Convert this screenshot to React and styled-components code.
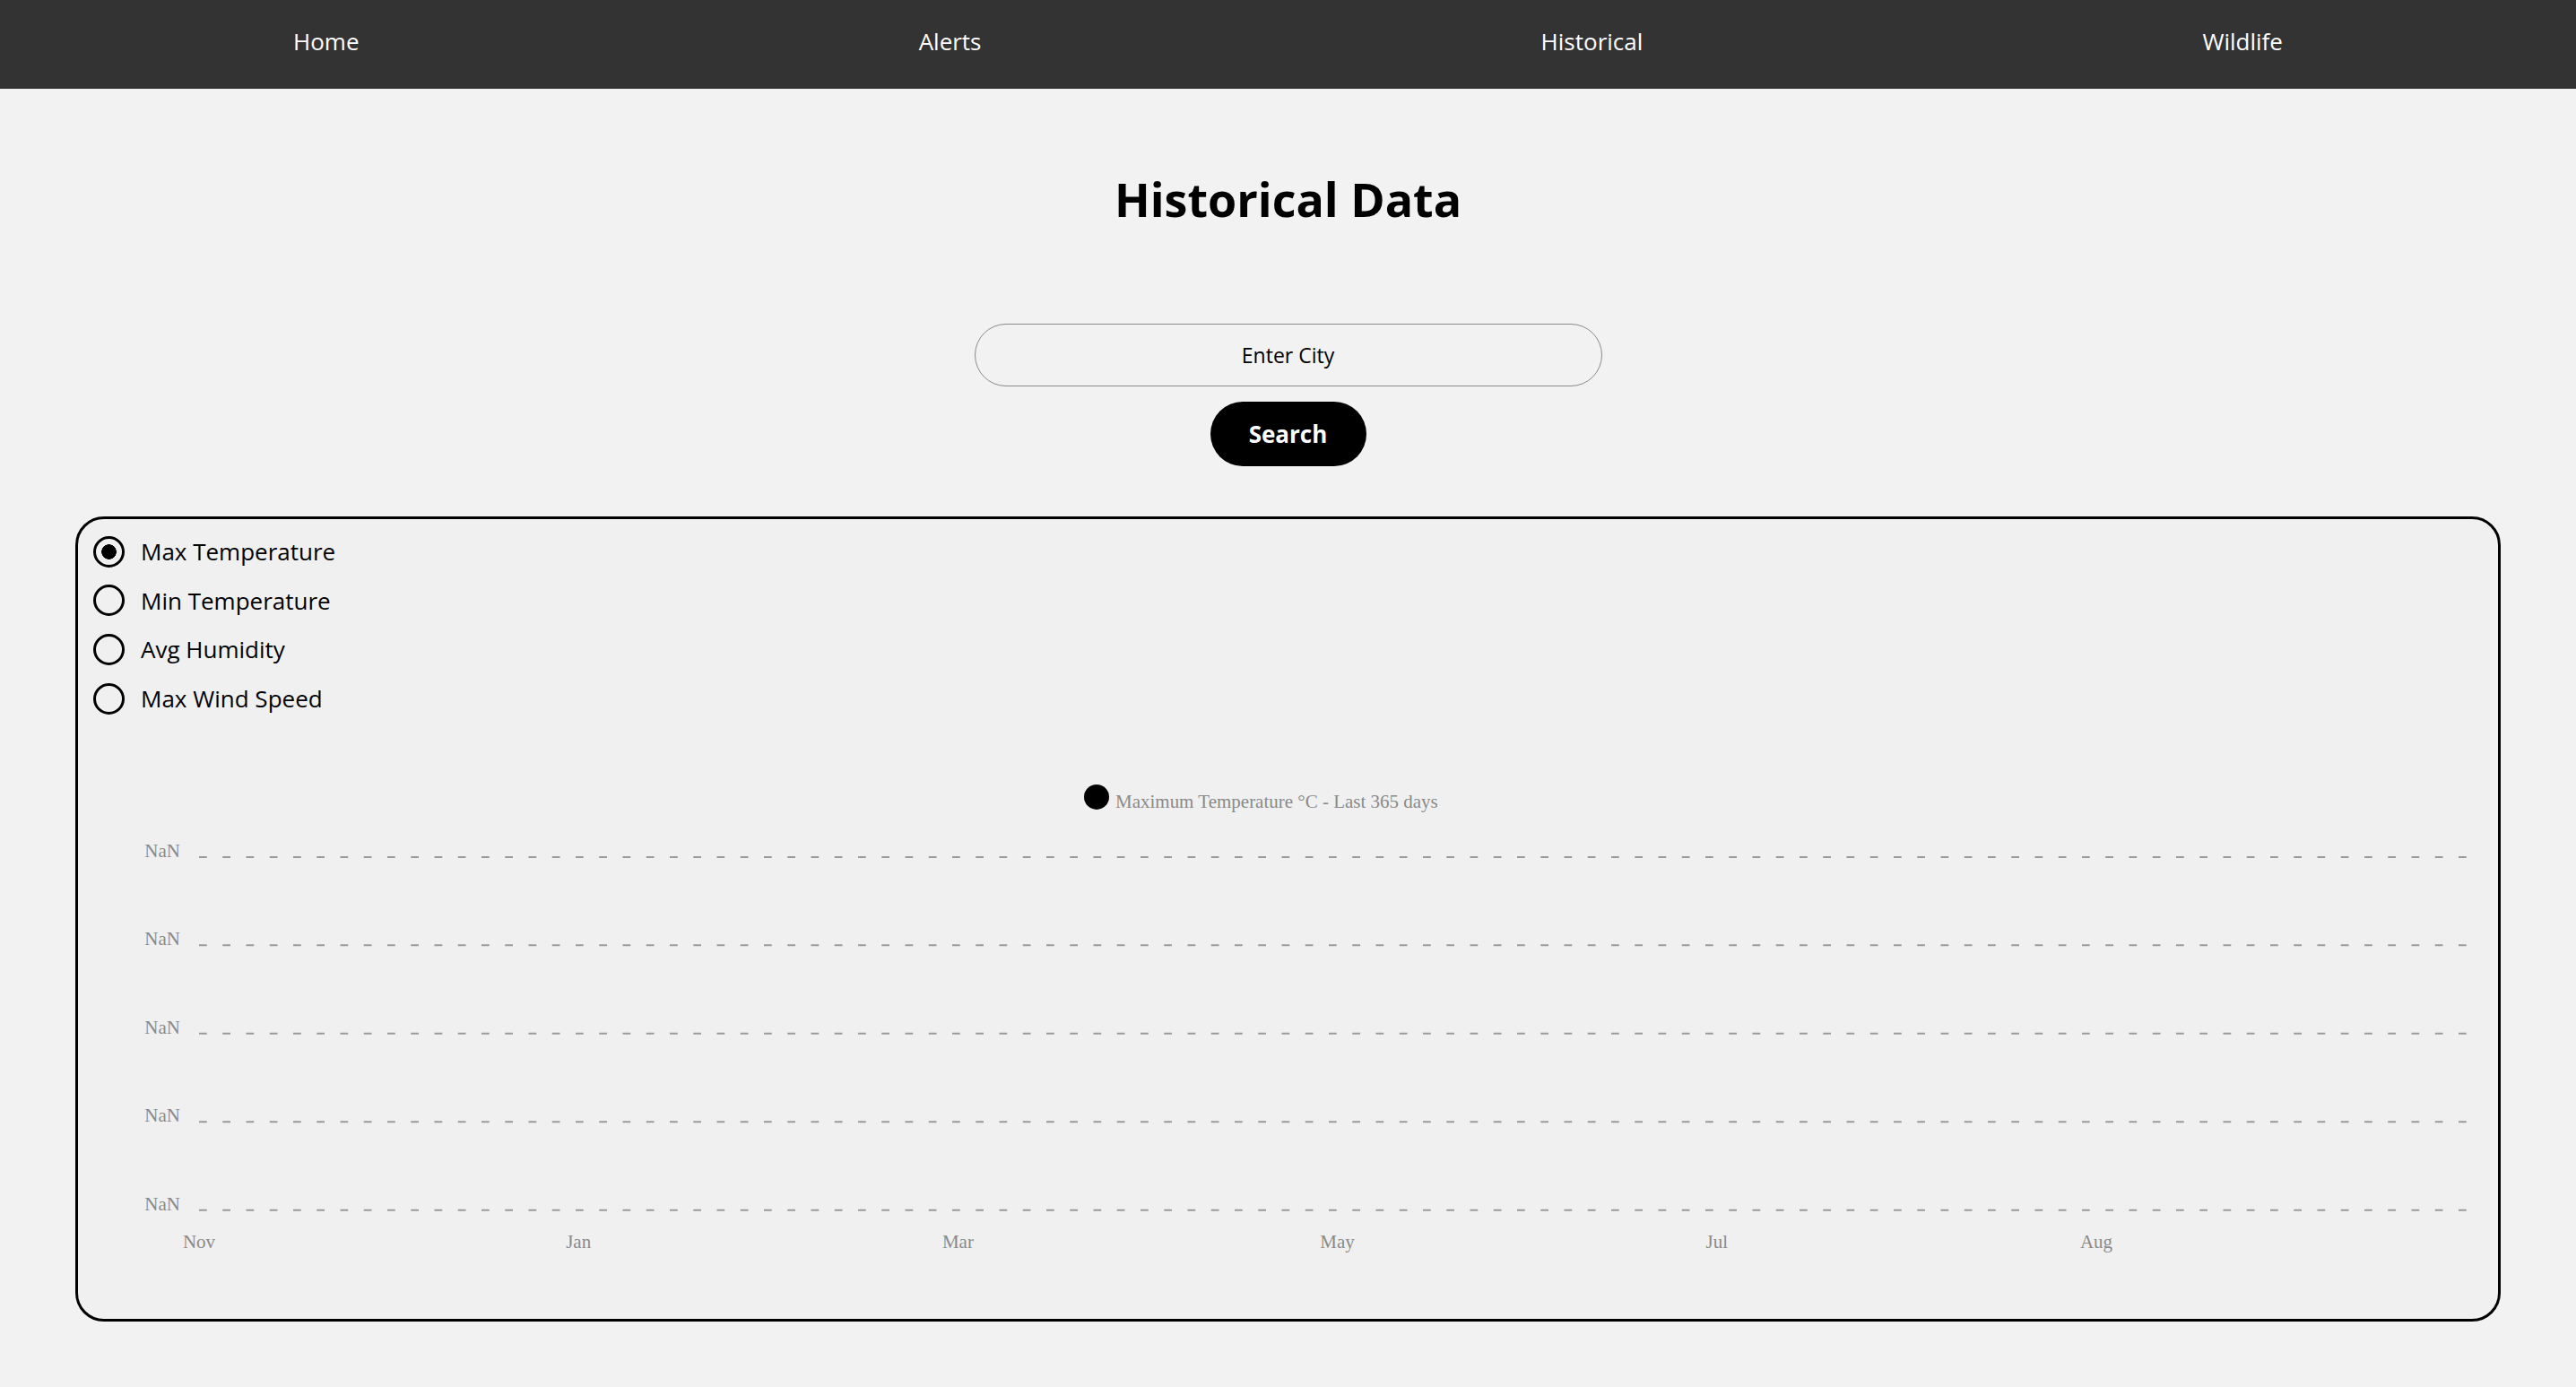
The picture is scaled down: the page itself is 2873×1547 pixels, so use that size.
import React, { useState } from "react";
import styled, { createGlobalStyle } from "styled-components";

const GlobalStyle = createGlobalStyle`
  html, body {
    margin: 0;
    padding: 0;
    background: #f2f2f2;
  }
  body {
    font-family: "Open Sans", "Noto Sans", sans-serif;
    color: #000;
  }
`;

const NavBar = styled.nav`
  height: 99px;
  padding: 0 15px;
  background: #333333;
  display: flex;
  justify-content: space-around;
  align-items: center;
`;

const NavLink = styled.a`
  color: #ffffff;
  font-size: 26px;
  text-decoration: none;
  line-height: 1;
  padding-bottom: 7px;
`;

const Main = styled.main`
  display: flex;
  flex-direction: column;
  align-items: center;
  padding: 0 84px 60px;
`;

const Title = styled.h1`
  margin: 92px 0 0;
  font-size: 52px;
  line-height: 62px;
  font-weight: 700;
  color: #000;
`;

const SearchForm = styled.form`
  margin-top: 108px;
  display: flex;
  flex-direction: column;
  align-items: center;
  gap: 17px;
`;

const CityInput = styled.input`
  width: 700px;
  height: 70px;
  box-sizing: border-box;
  border: 1px solid #8a8a8a;
  border-radius: 35px;
  background: transparent;
  text-align: center;
  font-family: "Open Sans", "Noto Sans", sans-serif;
  font-size: 23px;
  color: #000;
  outline: none;
  &::placeholder {
    color: #000;
  }
`;

const SearchButton = styled.button`
  width: 174px;
  height: 72px;
  border: none;
  border-radius: 36px;
  background: #000;
  color: #fff;
  font-family: "Open Sans", "Noto Sans", sans-serif;
  font-weight: 700;
  font-size: 26px;
  cursor: pointer;
`;

const ChartCard = styled.section`
  margin-top: 56px;
  align-self: stretch;
  height: 898px;
  box-sizing: border-box;
  border: 3px solid #000;
  border-radius: 32px;
  background: #f0f0f0;
  display: flex;
  flex-direction: column;
  overflow: hidden;
`;

const RadioGroup = styled.div`
  padding: 9px 0 0 17px;
  display: flex;
  flex-direction: column;
`;

const RadioRow = styled.label`
  height: 54.6px;
  display: flex;
  align-items: center;
  gap: 18px;
  font-size: 26px;
  color: #000;
  cursor: pointer;
`;

const RadioInput = styled.input.attrs({ type: "radio" })`
  appearance: none;
  -webkit-appearance: none;
  margin: 0;
  width: 35px;
  height: 35px;
  box-sizing: border-box;
  border: 3px solid #000;
  border-radius: 50%;
  background: transparent;
  &:checked {
    background: radial-gradient(circle, #000 0 8px, transparent 8.6px);
  }
`;

const ChartSvg = styled.svg`
  display: block;
  width: 100%;
  height: 665px;
`;

const options = [
  "Max Temperature",
  "Min Temperature",
  "Avg Humidity",
  "Max Wind Speed",
];

const gridYs = [956, 1054.5, 1153, 1251.5, 1350];
const months = ["Nov", "Jan", "Mar", "May", "Jul", "Aug"];

function Chart() {
  return (
    <ChartSvg viewBox="87 806 2699 665" preserveAspectRatio="none">
      <circle cx="1223" cy="889" r="14" fill="#000" />
      <text
        x="1244"
        y="901"
        fontFamily="'Liberation Serif', 'Times New Roman', serif"
        fontSize="21"
        fill="#8a8a8a"
      >
        Maximum Temperature °C - Last 365 days
      </text>
      {gridYs.map((y) => (
        <g key={y}>
          <line
            x1="222"
            x2="2752"
            y1={y}
            y2={y}
            stroke="#9a9a9a"
            strokeWidth="2"
            strokeDasharray="8.75 17.5"
          />
          <text
            x="201"
            y={y}
            textAnchor="end"
            fontFamily="'Liberation Serif', 'Times New Roman', serif"
            fontSize="21"
            fill="#8a8a8a"
          >
            NaN
          </text>
        </g>
      ))}
      {months.map((m, i) => (
        <text
          key={m}
          x={222 + i * 423.2}
          y="1392"
          textAnchor="middle"
          fontFamily="'Liberation Serif', 'Times New Roman', serif"
          fontSize="21"
          fill="#8a8a8a"
        >
          {m}
        </text>
      ))}
    </ChartSvg>
  );
}

export default function App() {
  const [selected, setSelected] = useState(options[0]);
  const [city, setCity] = useState("");
  return (
    <>
      <GlobalStyle />
      <NavBar>
        <NavLink href="#">Home</NavLink>
        <NavLink href="#">Alerts</NavLink>
        <NavLink href="#">Historical</NavLink>
        <NavLink href="#">Wildlife</NavLink>
      </NavBar>
      <Main>
        <Title>Historical Data</Title>
        <SearchForm onSubmit={(e) => e.preventDefault()}>
          <CityInput
            placeholder="Enter City"
            value={city}
            onChange={(e) => setCity(e.target.value)}
          />
          <SearchButton type="submit">Search</SearchButton>
        </SearchForm>
        <ChartCard>
          <RadioGroup>
            {options.map((o) => (
              <RadioRow key={o}>
                <RadioInput
                  name="metric"
                  checked={selected === o}
                  onChange={() => setSelected(o)}
                />
                {o}
              </RadioRow>
            ))}
          </RadioGroup>
          <Chart />
        </ChartCard>
      </Main>
    </>
  );
}
